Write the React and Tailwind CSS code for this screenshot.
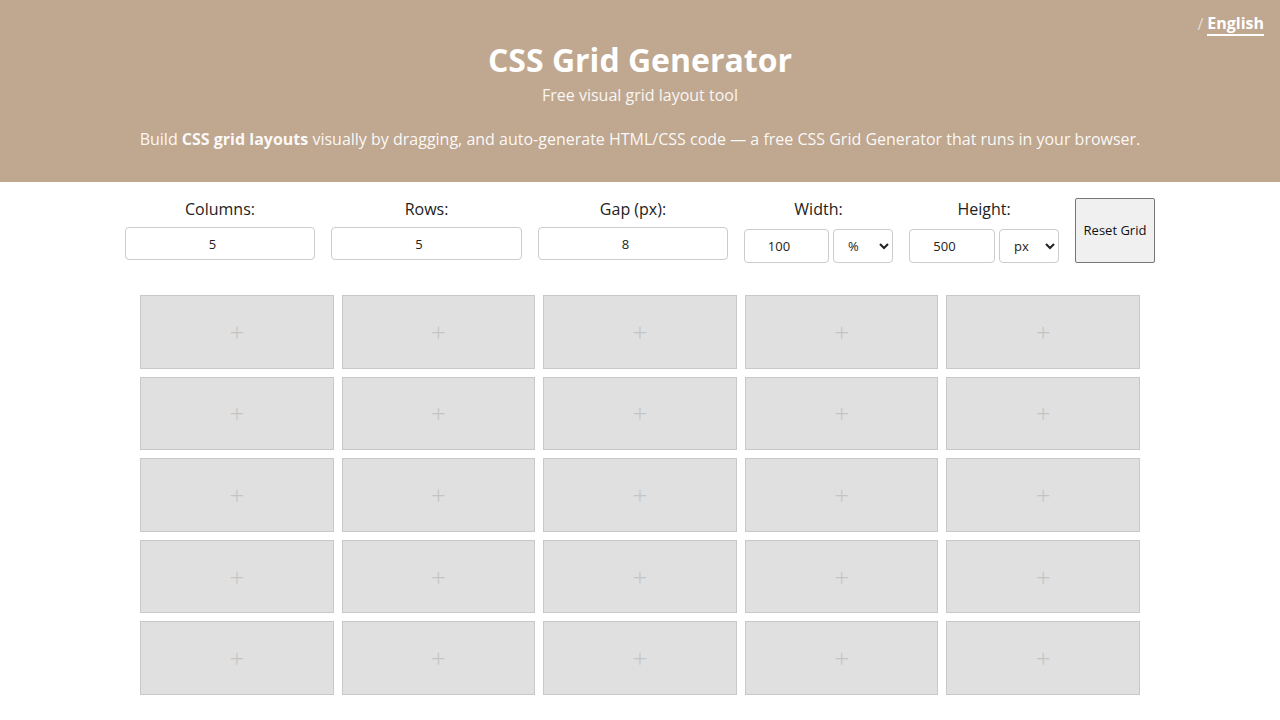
import React, { useState } from 'react';

const font = { fontFamily: '"Open Sans", "Liberation Sans", sans-serif' };

function Field({ label, value, onChange, width }) {
    return (
        <div className={`flex flex-col items-center ${width}`}>
            <label className="text-[16px] leading-[24px] text-[#222]">{label}</label>
            <input
                type="number"
                value={value}
                onChange={(e) => onChange(e.target.value)}
                className="mt-[6px] w-full h-[33px] border border-[#ccc] rounded-[4px] text-center text-[13px] text-[#222] bg-white outline-none"
            />
        </div>
    );
}

function SizeField({ label, value, unit, units, width, inputWidth }) {
    return (
        <div className={`flex flex-col items-center ${width}`}>
            <label className="text-[16px] leading-[24px] text-[#222]">{label}</label>
            <div className="mt-2 flex gap-1 w-full">
                <input
                    type="number"
                    defaultValue={value}
                    className={`${inputWidth} h-[34px] border border-[#ccc] rounded-[4px] text-center text-[13px] text-[#222] bg-white outline-none`}
                />
                <select
                    defaultValue={unit}
                    className="w-[60px] h-[34px] border border-[#ccc] rounded-[4px] pl-[10px] text-[13px] text-[#222] bg-white outline-none"
                >
                    {units.map(u => <option key={u}>{u}</option>)}
                </select>
            </div>
        </div>
    );
}

export default function App() {
    const [cols, setCols] = useState(5);
    const [rows, setRows] = useState(5);
    const [gap, setGap] = useState(8);

    const cells = Array.from({ length: 25 });

    return (
        <div className="min-h-screen bg-white" style={font}>
            <header className="relative bg-[#c0a78f] text-white text-center pt-[40px] pb-[31px]">
                <div className="absolute top-[12px] right-[16px] flex items-center gap-[4px] text-[16px] leading-[24px]">
                    <span className="text-white/60">/</span>
                    <a className="font-bold border-b-2 border-white leading-[22px]">English</a>
                </div>
                <h1 className="text-[32px] leading-[40px] font-bold">CSS Grid Generator</h1>
                <p className="mt-[3px] text-[16px] leading-[24px] text-white/90">Free visual grid layout tool</p>
                <p className="mt-[20px] text-[16px] leading-[24px] text-white/95">
                    Build <strong className="font-bold">CSS grid layouts</strong> visually by dragging, and auto-generate HTML/CSS code — a free CSS Grid Generator that runs in your browser.
                </p>
            </header>

            <div className="flex justify-center items-start gap-4 pt-[15px]">
                <Field label="Columns:" value={cols} onChange={setCols} width="w-[190px]" />
                <Field label="Rows:" value={rows} onChange={setRows} width="w-[191px]" />
                <Field label="Gap (px):" value={gap} onChange={setGap} width="w-[190px]" />
                <SizeField label="Width:" value="100" unit="%" units={['%', 'px']} width="w-[149px]" inputWidth="w-[85px]" />
                <SizeField label="Height:" value="500" unit="px" units={['px', '%']} width="w-[150px]" inputWidth="w-[86px]" />
                <button className="mt-[1px] w-[80px] h-[65px] bg-[#f0f0f0] border border-[#767676] rounded-[2px] text-[13px] text-[#111]">
                    Reset Grid
                </button>
            </div>

            <div className="w-[1000px] mx-auto mt-[32px] grid grid-cols-5 gap-2 auto-rows-[73.6px]">
                {cells.map((_, i) => (
                    <div key={i} className="bg-[#e0e0e0] border border-[#c8c8c8] flex items-center justify-center text-[26px] leading-none font-light text-[#c4c4c4] select-none">
                        +
                    </div>
                ))}
            </div>
        </div>
    );
}
